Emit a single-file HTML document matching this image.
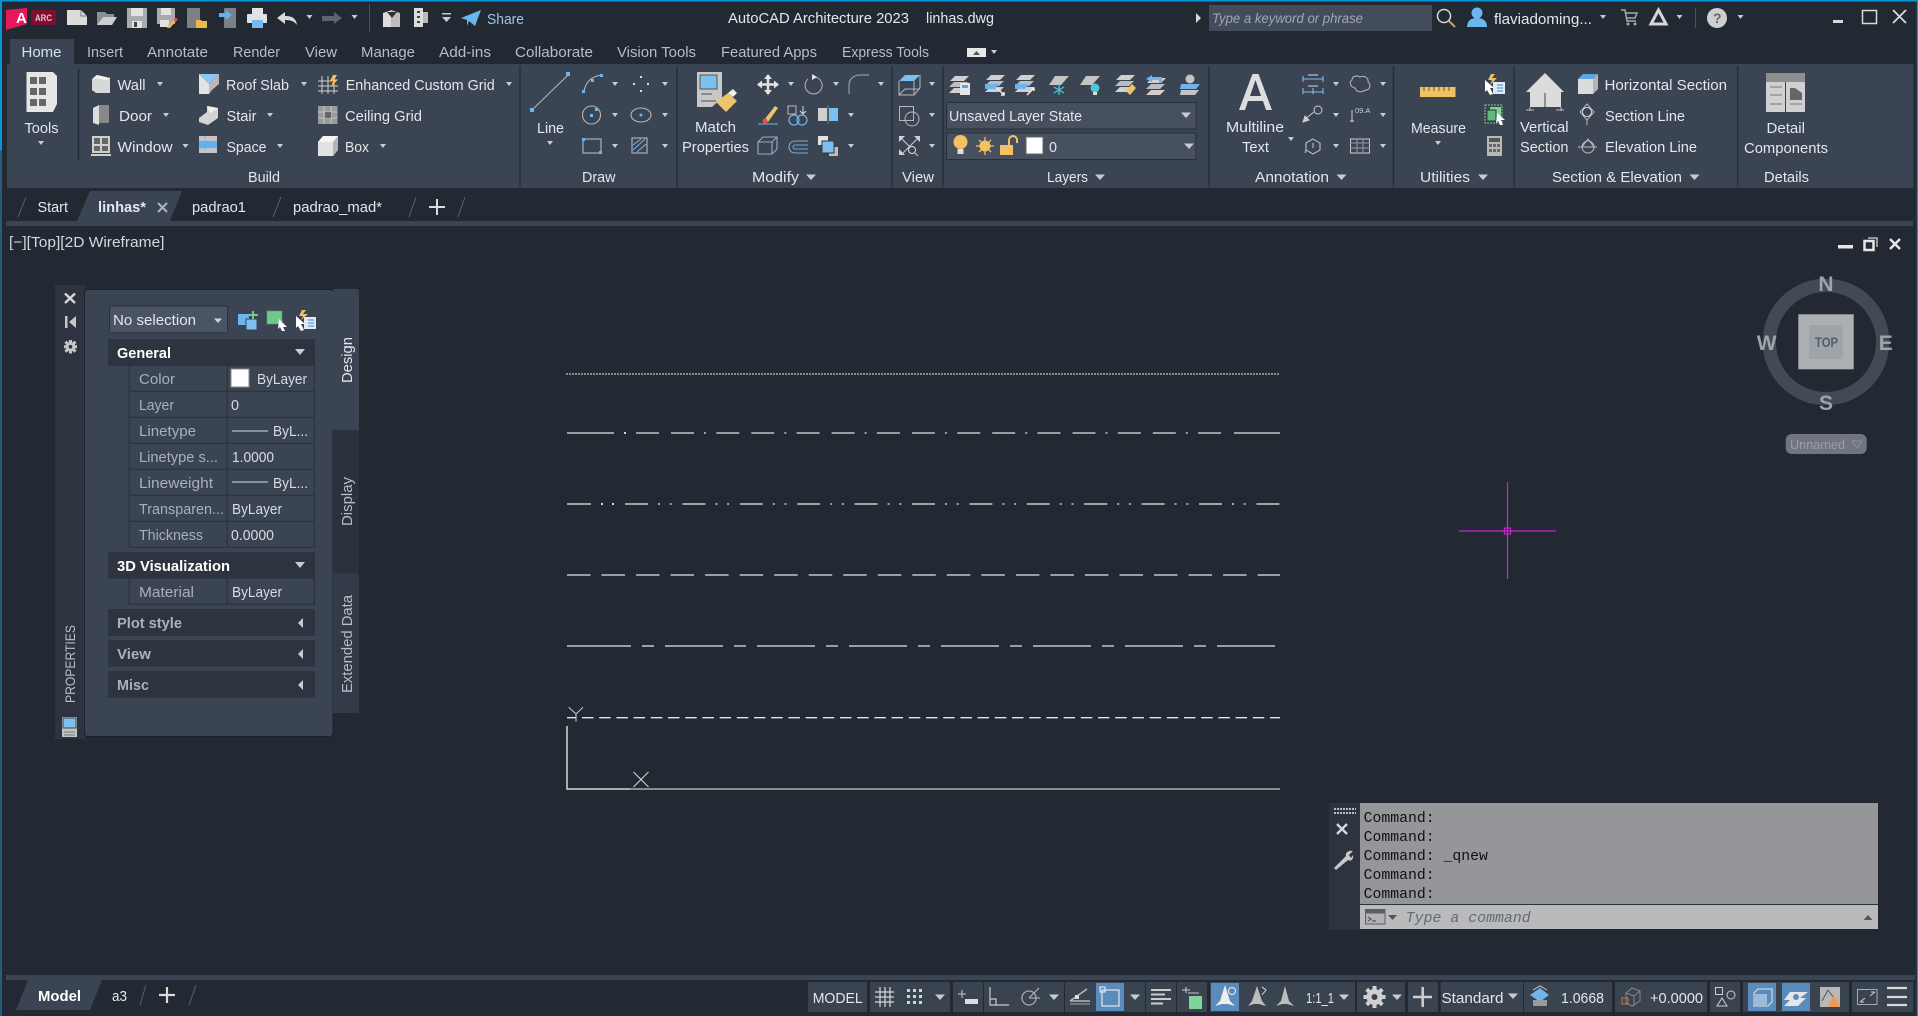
<!DOCTYPE html>
<html lang="en"><head><meta charset="utf-8"><title>AutoCAD Architecture 2023 - linhas.dwg</title>
<style>
html,body{margin:0;padding:0;width:1918px;height:1016px;overflow:hidden;background:#222933}
svg{display:block;position:absolute;left:0;top:0}
text{font-family:"Liberation Sans",sans-serif;font-size:15px;fill:#e4e7eb}
.t{fill:#b7bec9}.b{font-weight:bold}.m{font-family:"Liberation Mono","DejaVu Sans Mono",monospace;font-size:14.8px;fill:#111}
.l{fill:#a9b0ba}.v{fill:#d8dbe0}.g{fill:#aab1bb;font-weight:bold}
.sb{fill:#3a4350}.hl{fill:#5a8bbd}
.k{fill:none;stroke:#b4b8bd;stroke-width:1.1}.kb{fill:none;stroke:#6fb4ea;stroke-width:1.2}
</style></head><body>
<svg width="1918" height="1016" viewBox="0 0 1918 1016" xmlns="http://www.w3.org/2000/svg" shape-rendering="geometricPrecision">
<defs>
<path id="a" d="M-3-2H3L0 2Z" fill="#c8ccd2"/>
<path id="af" d="M-5-2.5H5L0 3Z" fill="#c8ccd2"/>
<g id="stk"><path d="M6 0H20L15 5H1Z" fill="#d0d0d0"/><path d="M5 6H19L14 11H0Z" fill="#bdbdbd"/><path d="M5 12H19L14 17H0Z" fill="#d0d0d0"/></g>
</defs>
<rect width="1918" height="1016" fill="#222933"/>
<rect width="1918" height="1.5" fill="#0696d7"/>
<rect width="2" height="150" fill="#0696d7"/>
<rect y="150" width="2" height="866" fill="#2a5b7c"/>
<rect x="1916.8" width="1.2" height="1016" fill="#0696d7"/>

<!-- QAT -->
<path d="M6 10L27 8V24L6 30Z" fill="#e8175d"/><text x="16" y="23" class="b" style="fill:#fff;font-size:15px">A</text>
<rect x="31" y="10" width="25" height="15" fill="#7f0f31"/><text x="35" y="21" class="b" textLength="17" lengthAdjust="spacingAndGlyphs" style="font-size:9.5px;fill:#e6c3ce">ARC</text>
<path d="M67 10H81L87 16V25H67Z" fill="#dcdcdc"/><path d="M81 10V16H87" fill="none" stroke="#777"/>
<path d="M97 25V12H105L107 14H114V17H103Z" fill="#8a8f96"/><path d="M97 25L103 17H117L112 25Z" fill="#cfcfcf"/>
<path d="M127 8H147V28H127Z" fill="#a8abaf"/><rect x="131" y="8" width="12" height="8" fill="#e2e2e2"/><rect x="132" y="21" width="10" height="7" fill="#e2e2e2"/><rect x="134" y="22" width="3" height="5" fill="#444"/>
<path d="M157 8H175V24H157Z" fill="#a8abaf"/><rect x="161" y="8" width="10" height="7" fill="#e2e2e2"/><rect x="160" y="20" width="9" height="7" fill="#e2e2e2"/><path d="M168 26L175 18L177 20L170 28L167 28Z" fill="#f0b95a"/><circle cx="175.500" cy="19.500" r="1.800" fill="#e0564a"/>
<rect x="187" y="8" width="13" height="20" rx="1" fill="#7d8085"/><path d="M196 20H201L202 21H207V28H196Z" fill="#e8b84a"/>
<rect x="224" y="8" width="12" height="20" rx="1" fill="#7d8085"/><path d="M219 13H226V10L232 15L226 20V17H219Z" fill="#5fb2ee"/>
<path d="M252 8H263V14H252Z" fill="#e2e2e2"/><rect x="247" y="14" width="20" height="9" rx="1" fill="#e2e2e2"/><rect x="252" y="20" width="11" height="8" fill="#72bbef"/>
<path d="M277 18L285 12V16C292 16 296 18 297 25C294 21 290 20 285 20V24Z" fill="#d8d8d8"/>
<use href="#a" x="309.500" y="17"/>
<path d="M342 18L334 12V16H322V21H334V24Z" fill="#5c6470"/>
<use href="#a" x="354.500" y="17"/>
<rect x="369" y="4" width="1" height="28" fill="#4a525e"/>
<path d="M383 13L392 10V27H383Z" fill="#dcdcdc"/><path d="M391 10L400 13V27H391Z" fill="#bdbdbd"/><path d="M387 12L392 18L397 12Z" fill="#333"/>
<rect x="414" y="8" width="9" height="19" fill="#dcdcdc"/><rect x="423" y="12" width="5" height="11" fill="#bbb"/><rect x="417" y="11" width="3" height="2" fill="#444"/><rect x="417" y="16" width="3" height="2" fill="#444"/><rect x="417" y="21" width="3" height="2" fill="#444"/>
<rect x="442" y="13" width="9" height="1.500" fill="#c8ccd2"/><path d="M442 17H451L446.500 22Z" fill="#c8ccd2"/>
<path d="M461 18L481 10L475 26L469 21L467 26V20Z" fill="#6ab7ef"/>
<text x="487" y="24" class="t" textLength="37" lengthAdjust="spacingAndGlyphs" style="fill:#9fc4e4">Share</text>

<!-- Title -->
<text x="728" y="23" textLength="181" lengthAdjust="spacingAndGlyphs">AutoCAD Architecture 2023</text>
<text x="926" y="23" textLength="68" lengthAdjust="spacingAndGlyphs">linhas.dwg</text>
<path d="M1196 13L1201 18L1196 23Z" fill="#d6d6d6"/>
<rect x="1209" y="5" width="223" height="26" fill="#434c5b"/>
<text x="1212" y="23" font-style="italic" textLength="151" lengthAdjust="spacingAndGlyphs" style="fill:#a1a8b3;font-size:14px">Type a keyword or phrase</text>
<circle cx="1444" cy="16" r="6.500" fill="none" stroke="#d6d6d6" stroke-width="1.500"/><path d="M1449 21L1455 27" stroke="#c9a15a" stroke-width="2"/>
<circle cx="1477" cy="13" r="5.500" fill="#6ab7ef"/><path d="M1467 27C1467 20 1472 18 1477 18S1487 20 1487 27Z" fill="#6ab7ef"/>
<text x="1494" y="24" textLength="98" lengthAdjust="spacingAndGlyphs">flaviadoming...</text>
<use href="#a" x="1603" y="17"/>
<path d="M1621 10H1625L1627 21H1636M1626 13H1637L1635 18H1627" fill="none" stroke="#a8a8a8" stroke-width="1.500"/><circle cx="1628" cy="24" r="1.500" fill="#a8a8a8"/><circle cx="1635" cy="24" r="1.500" fill="#a8a8a8"/>
<path d="M1658.500 10L1666 24H1651Z" fill="none" stroke="#d6d6d6" stroke-width="3"/>
<use href="#a" x="1679.500" y="17"/>
<rect x="1695" y="8" width="1" height="20" fill="#4a525e"/>
<circle cx="1717" cy="18" r="10" fill="#cfcfcf"/><text x="1713" y="23" class="b" style="fill:#666;font-size:14px">?</text>
<use href="#a" x="1740.500" y="17"/>
<rect x="1833" y="20" width="10" height="3" fill="#dadada"/>
<rect x="1862.500" y="10.500" width="14" height="13" fill="none" stroke="#dadada" stroke-width="1.500"/>
<path d="M1893 10L1906 23M1906 10L1893 23" stroke="#dadada" stroke-width="1.800"/>

<!-- Tabs -->
<rect x="10" y="39" width="64" height="25" fill="#3b4453"/>
<g>
<text x="21.500" y="57" textLength="40" lengthAdjust="spacingAndGlyphs" style="fill:#d5e2ee">Home</text>
<text x="87" y="57" class="t" textLength="36" lengthAdjust="spacingAndGlyphs">Insert</text>
<text x="147" y="57" class="t" textLength="61" lengthAdjust="spacingAndGlyphs">Annotate</text>
<text x="233" y="57" class="t" textLength="47" lengthAdjust="spacingAndGlyphs">Render</text>
<text x="305" y="57" class="t" textLength="32" lengthAdjust="spacingAndGlyphs">View</text>
<text x="361" y="57" class="t" textLength="54" lengthAdjust="spacingAndGlyphs">Manage</text>
<text x="439" y="57" class="t" textLength="52" lengthAdjust="spacingAndGlyphs">Add-ins</text>
<text x="515" y="57" class="t" textLength="78" lengthAdjust="spacingAndGlyphs">Collaborate</text>
<text x="617" y="57" class="t" textLength="79" lengthAdjust="spacingAndGlyphs">Vision Tools</text>
<text x="721" y="57" class="t" textLength="96" lengthAdjust="spacingAndGlyphs">Featured Apps</text>
<text x="842" y="57" class="t" textLength="87" lengthAdjust="spacingAndGlyphs">Express Tools</text>
</g>
<rect x="967" y="48" width="19" height="9" fill="#e8e8e8"/><path d="M973 55H980L976.500 51Z" fill="#555"/><use href="#a" x="994" y="52"/>

<!-- Ribbon -->
<rect x="7" y="64" width="1906.500" height="124" fill="#3b4453"/>
<g stroke="#272e39" stroke-width="1.500">
<path d="M520 66V187M677 66V187M892 66V187M943 66V187M1209 66V187M1393.500 66V187M1514 66V187M1737.600 66V187"/>
<path d="M78.500 69V160" stroke="#222933"/>
</g>
<!-- Tools -->
<path d="M26.500 72H53L57 76V104L53 112H26.500Z" fill="#e6e6e6"/>
<g fill="#666"><rect x="30" y="77" width="7" height="7"/><rect x="39" y="77" width="7" height="7"/><rect x="30" y="88" width="7" height="7"/><rect x="39" y="88" width="7" height="7"/><rect x="30" y="99" width="7" height="7"/><rect x="39" y="99" width="7" height="7"/></g>
<text x="24.500" y="133" textLength="34" lengthAdjust="spacingAndGlyphs">Tools</text><use href="#a" x="41" y="143"/>
<!-- Build -->
<path d="M92 79L97 75L110 78V93H96L92 90Z" fill="#d8d8d8"/><path d="M97 75L110 78L107 80L93 78Z" fill="#f0f0f0"/>
<text x="117.500" y="90" textLength="28" lengthAdjust="spacingAndGlyphs">Wall</text><use href="#a" x="160" y="84"/>
<path d="M93 108L99 105V125L93 123Z" fill="#dcdcdc"/><rect x="99" y="105" width="10" height="18" fill="#888"/>
<text x="119" y="121" textLength="33" lengthAdjust="spacingAndGlyphs">Door</text><use href="#a" x="166" y="115"/>
<rect x="92" y="136" width="18" height="17" fill="#cfcfcf"/><g fill="#666"><rect x="94" y="138" width="6" height="6"/><rect x="102" y="138" width="6" height="6"/><rect x="94" y="146" width="6" height="5"/><rect x="102" y="146" width="6" height="5"/></g><rect x="91" y="154" width="20" height="2" fill="#cfcfcf"/>
<text x="117.500" y="152" textLength="55" lengthAdjust="spacingAndGlyphs">Window</text><use href="#a" x="185.500" y="146"/>
<path d="M199 74H219L209 84Z" fill="#8cc8f5"/><path d="M199 74L209 84V94H199Z" fill="#e4e4e4"/><path d="M219 74L209 84V94L212 90L219 84Z" fill="#b8b8b8"/>
<text x="226" y="90" textLength="63" lengthAdjust="spacingAndGlyphs">Roof Slab</text><use href="#a" x="304" y="84"/>
<path d="M199 118L207 112V106L218 108V118L208 125L199 122Z" fill="#d4d4d4"/><path d="M207 106L218 108L210 113Z" fill="#f2f2f2"/>
<text x="226.500" y="121" textLength="30" lengthAdjust="spacingAndGlyphs">Stair</text><use href="#a" x="270" y="115"/>
<rect x="199" y="136" width="18" height="17" fill="#c5c5c5"/><rect x="199" y="141" width="18" height="7" fill="#5fb2ee"/><path d="M205 136V153" stroke="#5fb2ee" stroke-dasharray="2 2"/>
<text x="226.500" y="152" textLength="40" lengthAdjust="spacingAndGlyphs">Space</text><use href="#a" x="280" y="146"/>
<path d="M322 76V94M328 76V94M334 80V94M318 81H332M318 86H338M318 91H338" stroke="#cfcfcf" fill="none"/><path d="M333 75L337 75L334.500 79.500H338L331 87L333 81H330Z" fill="#f3c15d"/>
<text x="345.700" y="90" textLength="149" lengthAdjust="spacingAndGlyphs">Enhanced Custom Grid</text><use href="#a" x="509" y="84"/>
<rect x="318" y="106" width="19.500" height="18" fill="#999"/><path d="M324 106V124M331 106V124M318 112H337.500M318 118H337.500" stroke="#c4c4c4"/><rect x="325" y="112" width="6" height="6" fill="#666"/>
<text x="345" y="121" textLength="77" lengthAdjust="spacingAndGlyphs">Ceiling Grid</text>
<path d="M318 142L323 136H338V150L333 156H318Z" fill="#e2e2e2"/><path d="M333 142H318L323 136H338Z" fill="#f4f4f4"/><path d="M333 142L338 136V150L333 156Z" fill="#b4b4b4"/>
<text x="345" y="152" textLength="24" lengthAdjust="spacingAndGlyphs">Box</text><use href="#a" x="383" y="146"/>
<text x="248" y="182" textLength="32" lengthAdjust="spacingAndGlyphs">Build</text>
<!-- Draw -->
<path d="M532 110L568 75" stroke="#b4b8bd" stroke-width="1"/><rect x="530" y="108" width="4" height="4" fill="#6fb4ea"/><rect x="566" y="72" width="4" height="4" fill="#6fb4ea"/>
<text x="537" y="133" textLength="27" lengthAdjust="spacingAndGlyphs">Line</text><use href="#a" x="550" y="143"/>
<path d="M584 92C585 82 592 76 602 75" class="k"/><rect x="582" y="90" width="3" height="3" fill="#6fb4ea"/><rect x="591" y="79" width="3" height="3" fill="#6fb4ea"/><rect x="600" y="74" width="3" height="3" fill="#6fb4ea"/><use href="#a" x="615" y="84"/>
<circle cx="591.500" cy="115" r="9" class="k"/><rect x="590" y="114" width="3" height="3" fill="#6fb4ea"/><rect x="595" y="108" width="3" height="3" fill="#6fb4ea"/><use href="#a" x="615" y="115"/>
<rect x="583" y="139" width="18" height="14" class="k"/><rect x="582" y="138" width="3" height="3" fill="#6fb4ea"/><rect x="599" y="151" width="3" height="3" fill="#6fb4ea"/><use href="#a" x="615" y="146"/>
<g fill="#dcdcdc"><rect x="633" y="83" width="2" height="2"/><rect x="640" y="76" width="2" height="2"/><rect x="647" y="83" width="2" height="2"/><rect x="640" y="90" width="2" height="2"/></g><use href="#a" x="665" y="84"/>
<ellipse cx="641" cy="115" rx="10" ry="7" class="k"/><circle cx="641" cy="115" r="1.500" fill="#6fb4ea"/><use href="#a" x="665" y="115"/>
<rect x="632" y="138" width="15" height="15" class="k"/><path d="M633 150L645 139M633 145L641 139M637 152L646 144" stroke="#6fb4ea"/><use href="#a" x="665" y="146"/>
<text x="582" y="182" textLength="33.500" lengthAdjust="spacingAndGlyphs">Draw</text>
<!-- Modify -->
<path d="M697 72H722V98L712 107H697Z" fill="#c8c8c8"/><rect x="700" y="75" width="17" height="14" fill="#7cc0f0" stroke="#555"/><path d="M701 94H712M701 101H716" stroke="#777" stroke-width="1.500"/>
<path d="M716 102L728 93L737 101L726 112Z" fill="#eec36a"/><path d="M728 93L733 89L737 93L733 97Z" fill="#eee"/>
<text x="695" y="132" textLength="41" lengthAdjust="spacingAndGlyphs">Match</text>
<text x="682" y="152" textLength="67" lengthAdjust="spacingAndGlyphs">Properties</text>
<path d="M768 75V94M758 84.500H778" stroke="#e4e4e4" stroke-width="2.500"/><path d="M768 74L772 79H764ZM768 95L772 90H764ZM757 84.500L762 80.500V88.500ZM779 84.500L774 80.500V88.500Z" fill="#e4e4e4"/><use href="#a" x="791" y="84"/>
<path d="M815 77A8.500 8.500 0 1 1 808 79" fill="none" stroke="#aaa" stroke-width="1.100"/><path d="M812 74L817 77L812 80Z" fill="#e4e4e4"/><use href="#a" x="836" y="84"/>
<path d="M849 94V85" fill="none" stroke="#aaa" stroke-width="1"/><path d="M849 85C849 79 854 75 860 75" fill="none" stroke="#6fb4ea" stroke-width="1.100"/><path d="M860 75H869" stroke="#aaa"/><use href="#a" x="881" y="84"/>
<path d="M764 120L775 106L778 108L768 122Z" fill="#eec36a"/><circle cx="765" cy="121" r="2.500" fill="#e0564a"/><path d="M758 124H778" stroke="#6fb4ea"/>
<rect x="788" y="106" width="8" height="8" fill="none" stroke="#bbb"/><path d="M803 106V113M800 111L803 114L806 111" fill="none" stroke="#ddd"/><circle cx="794" cy="120" r="5" class="kb"/><circle cx="802" cy="120" r="5" class="kb"/>
<rect x="818" y="108" width="9" height="13" fill="#cfcfcf"/><rect x="829" y="108" width="9" height="13" fill="#7cc0f0"/><path d="M828 105V124" stroke="#777"/><use href="#a" x="851" y="115"/>
<path d="M758 142L763 137H777V149L772 154H758Z M758 142H772V154M772 142L777 137" fill="none" stroke="#8fb0cc" stroke-width="1.100"/>
<path d="M808 141H795A6 6 0 0 0 795 153H808M808 145H795A2 2 0 0 0 795 149H808" fill="none" stroke="#7aa9d0" stroke-width="1.100"/>
<rect x="818" y="136" width="10" height="9" fill="#e2e2e2"/><rect x="829" y="147" width="9" height="9" fill="#bdbdbd"/><rect x="822" y="141" width="12" height="12" fill="#7cc0f0" stroke="#333"/><use href="#a" x="851" y="146"/>
<text x="752" y="182" textLength="47" lengthAdjust="spacingAndGlyphs">Modify</text><use href="#af" x="811" y="177"/>
<!-- View -->
<path d="M899 81L905 75H920L914 81Z" fill="#7cc0f0"/><path d="M899 81V95H914V81M914 95L920 88V75M899 95L905 89H920" fill="none" stroke="#b8b8b8"/><use href="#a" x="932" y="84"/>
<rect x="899.500" y="106.500" width="14" height="14" fill="none" stroke="#b8b8b8"/><circle cx="912" cy="119" r="7" fill="none" stroke="#b8b8b8"/><use href="#a" x="932" y="115"/>
<path d="M900 137L915 152M919 137L902 154" stroke="#c4c4c4" stroke-width="1.200"/><path d="M899 136H905L899 142ZM920 136V142L914 136ZM899 155V149L905 155Z" fill="#d0d0d0"/><circle cx="912" cy="150" r="3.500" fill="#3b4453" stroke="#ddd"/><path d="M915 153L918 156" stroke="#c9a15a" stroke-width="1.500"/><use href="#a" x="932" y="146"/>
<text x="902" y="182" textLength="32" lengthAdjust="spacingAndGlyphs">View</text>
<!-- Layers -->
<use href="#stk" x="949" y="76"/><rect x="960" y="83" width="10" height="12" fill="#e6e6e6"/><rect x="962" y="85" width="6" height="3" fill="#5fa6de"/>
<use href="#stk" x="985" y="75"/><path d="M985 84H999L995 89H985Z" fill="#6fb4ea"/><path d="M997 88L1004 95M1001 95H1004V92" fill="none" stroke="#eee" stroke-width="1.500"/>
<use href="#stk" x="1015" y="75"/><path d="M1015 84H1029L1025 89H1015Z" fill="#6fb4ea"/><path d="M1027 95L1034 88M1031 88H1034V91" fill="none" stroke="#eee" stroke-width="1.500"/>
<path d="M1055 76H1069L1061 85H1049Z" fill="#c4c4c4"/><path d="M1059 84L1059 95M1054 87L1064 93M1064 87L1054 93" stroke="#4bc7d6" stroke-width="1.300"/>
<path d="M1086 76H1100L1092 85H1080Z" fill="#c4c4c4"/><circle cx="1095" cy="88" r="4.500" fill="#4bc7d6"/><rect x="1093" y="92" width="4" height="3" fill="#ddd"/>
<use href="#stk" x="1115" y="75"/><path d="M1126 91L1132 84L1136 88L1130 95Z" fill="#eec36a"/>
<use href="#stk" x="1146" y="78"/><path d="M1146 79L1152 75V77H1162V83H1159V80H1152V82Z" fill="#6fb4ea"/>
<path d="M1181 84H1200L1196 89H1180Z" fill="#6fb4ea"/><path d="M1181 90H1199L1195 95H1180Z" fill="#c4c4c4"/><circle cx="1190" cy="79" r="4.500" fill="#c4c4c4"/>
<rect x="946.500" y="102.500" width="249.500" height="26.500" fill="#46505f" stroke="#29303b"/>
<text x="949" y="121" textLength="133" lengthAdjust="spacingAndGlyphs">Unsaved Layer State</text><use href="#af" x="1186" y="115"/>
<rect x="946.500" y="133" width="249.500" height="26.500" fill="#46505f" stroke="#29303b"/>
<circle cx="960.500" cy="142" r="7" fill="#f4c262"/><rect x="957.500" y="149" width="6" height="5" fill="#e0e0e0"/>
<circle cx="985" cy="146" r="5.500" fill="#f4c262"/><path d="M985 137V141M985 151V155M976 146H980M990 146H994M979 140L982 143M988 149L991 152M991 140L988 143M982 149L979 152" stroke="#f4c262" stroke-width="1.300"/>
<rect x="1000" y="145" width="13" height="10" fill="#f4c262"/><path d="M1009 145V140A4 4 0 0 1 1017 140V143" fill="none" stroke="#f4c262" stroke-width="2"/>
<rect x="1026" y="137" width="17" height="17" fill="#fff" stroke="#666"/>
<text x="1049" y="152" textLength="8" lengthAdjust="spacingAndGlyphs">0</text><use href="#af" x="1189" y="146"/>
<text x="1047" y="182" textLength="41" lengthAdjust="spacingAndGlyphs">Layers</text><use href="#af" x="1100" y="177"/>
<!-- Annotation -->
<path d="M1239 110L1252.500 74H1258.500L1272 110H1266L1263 101H1248L1245 110ZM1250 96H1261L1255.500 80Z" fill="#dedede"/>
<text x="1226" y="132" textLength="58" lengthAdjust="spacingAndGlyphs">Multiline</text>
<text x="1242" y="152" textLength="27" lengthAdjust="spacingAndGlyphs">Text</text><use href="#a" x="1291" y="139"/>
<path d="M1303 79H1323M1303 76V82M1323 76V82M1303 92H1323M1303 88V94M1313 88V94M1323 88V94" fill="none" stroke="#7cbcec" stroke-width="1.100"/><path d="M1308 75H1318" stroke="#ddd"/><path d="M1308 86H1318" stroke="#ddd"/><use href="#a" x="1336" y="84"/>
<path d="M1352 80C1352 76 1357 75 1360 77C1364 75 1369 78 1368 82C1372 85 1369 91 1365 90C1362 93 1356 92 1355 88C1350 87 1349 82 1352 80Z" fill="none" stroke="#bbb"/><use href="#a" x="1383" y="84"/>
<circle cx="1318" cy="110" r="4" fill="none" stroke="#ccc"/><path d="M1314 112L1305 119M1303 122L1309 120L1305 116Z" fill="#ccc" stroke="#ccc"/><use href="#a" x="1336" y="115"/>
<path d="M1352 110V122M1350 121H1354" stroke="#ccc"/><text x="1355" y="113" style="font-size:7.500px;fill:#ccc">09.A</text><use href="#a" x="1383" y="115"/>
<path d="M1313 139L1320 143V150L1313 154L1306 150V143Z" fill="none" stroke="#ccc"/><path d="M1313 143V148" stroke="#ccc"/><path d="M1306 150L1305 153" stroke="#ccc"/><use href="#a" x="1336" y="146"/>
<rect x="1350.500" y="139" width="19" height="14" fill="none" stroke="#ccc"/><path d="M1350 143H1370M1350 148H1370M1357 139V153M1363 139V153" stroke="#999"/><use href="#a" x="1383" y="146"/>
<text x="1255" y="182" textLength="74" lengthAdjust="spacingAndGlyphs">Annotation</text><use href="#af" x="1341.500" y="177"/>
<!-- Utilities -->
<rect x="1420" y="87" width="35.500" height="10" fill="#f0c264"/><path d="M1424 87V91M1429 87V91M1434 87V91M1439 87V91M1444 87V91M1449 87V91" stroke="#7a5a20"/>
<text x="1411" y="133" textLength="55" lengthAdjust="spacingAndGlyphs">Measure</text><use href="#a" x="1438" y="143"/>
<rect x="1493" y="82" width="12" height="12" fill="#ddeaf5"/><path d="M1497 85H1503M1497 88H1503M1497 91H1503" stroke="#3b8ccc"/><path d="M1485 80L1494 88H1490L1493 94L1490 95L1487 90L1485 92Z" fill="#fff"/><path d="M1491 74L1495 74L1492 78H1497L1490 85L1492 80H1488Z" fill="#f0c264"/>
<rect x="1485" y="105" width="17" height="18" fill="none" stroke="#6fd08a" stroke-dasharray="2 1"/><rect x="1490" y="107" width="11" height="12" fill="#7ed39a"/><rect x="1487" y="110" width="9" height="11" fill="#5fb87d" stroke="#333"/><path d="M1497 113L1505 120H1501L1503 125L1500 125L1498 121L1496 123Z" fill="#fff"/>
<rect x="1487" y="136" width="15" height="20" fill="#b8b8b8"/><rect x="1489" y="138" width="11" height="4" fill="#555"/><g fill="#666"><rect x="1489" y="144" width="3" height="3"/><rect x="1493" y="144" width="3" height="3"/><rect x="1497" y="144" width="3" height="3"/><rect x="1489" y="149" width="3" height="3"/><rect x="1493" y="149" width="3" height="3"/><rect x="1497" y="149" width="3" height="3"/></g>
<text x="1420" y="182" textLength="50" lengthAdjust="spacingAndGlyphs">Utilities</text><use href="#af" x="1483" y="177"/>
<!-- Section -->
<path d="M1545 73L1564 92H1526Z" fill="#dcdcdc"/><rect x="1530" y="92" width="31" height="15" fill="#dcdcdc"/><path d="M1545 93V107" stroke="#444"/><path d="M1526 110H1534M1556 110H1564M1530 107V111M1561 107V111" stroke="#bbb"/>
<text x="1520" y="132" textLength="48.500" lengthAdjust="spacingAndGlyphs">Vertical</text>
<text x="1520" y="152" textLength="48.500" lengthAdjust="spacingAndGlyphs">Section</text>
<path d="M1578 79L1583 74H1598L1593 79Z" fill="#5fa6de"/><rect x="1578" y="79" width="15" height="15" fill="#dcdcdc"/><path d="M1593 79L1598 74V89L1593 94Z" fill="#b4b4b4"/>
<text x="1604.500" y="90" textLength="122.500" lengthAdjust="spacingAndGlyphs">Horizontal Section</text>
<circle cx="1587" cy="112" r="4.500" fill="none" stroke="#ddd"/><path d="M1587 104L1594 112L1587 120L1580 112Z" fill="none" stroke="#bbb"/><path d="M1587 120V125" stroke="#bbb"/>
<text x="1605" y="121" textLength="80" lengthAdjust="spacingAndGlyphs">Section Line</text>
<circle cx="1588" cy="147" r="6" fill="none" stroke="#bbb"/><path d="M1578 147H1597M1588 139L1582 147H1594Z" fill="none" stroke="#bbb"/>
<text x="1605" y="152" textLength="92" lengthAdjust="spacingAndGlyphs">Elevation Line</text>
<text x="1552" y="182" textLength="130" lengthAdjust="spacingAndGlyphs">Section &amp; Elevation</text><use href="#af" x="1694.500" y="177"/>
<!-- Details -->
<rect x="1766" y="73" width="39" height="9" fill="#8e8e8e"/><rect x="1766" y="82" width="19" height="30" fill="#d0d0d0"/><rect x="1786" y="82" width="19" height="30" fill="#d0d0d0"/><path d="M1770 87H1782M1770 95H1782M1770 104H1782" stroke="#777"/><path d="M1790 88H1795L1802 93V100H1790Z" fill="#666"/><path d="M1790 104H1802" stroke="#777"/>
<text x="1766.500" y="133" textLength="38.500" lengthAdjust="spacingAndGlyphs">Detail</text>
<text x="1744" y="153" textLength="84" lengthAdjust="spacingAndGlyphs">Components</text>
<text x="1764" y="182" textLength="45" lengthAdjust="spacingAndGlyphs">Details</text>

<!-- File tabs -->
<rect x="6" y="221" width="1907" height="5" fill="#3b4453"/>
<path d="M77 221L90 191H182L170 221Z" fill="#3b4453"/>
<g stroke="#59616d"><path d="M18 217L26 197M273 217L281 197M409 217L416 197M458 217L465 197"/></g>
<text x="37.500" y="212" textLength="30.500" lengthAdjust="spacingAndGlyphs">Start</text>
<text x="98" y="212" class="b" textLength="48" lengthAdjust="spacingAndGlyphs">linhas*</text>
<path d="M158 203L167 212M167 203L158 212" stroke="#b0b4ba" stroke-width="2"/>
<text x="192" y="212" textLength="54" lengthAdjust="spacingAndGlyphs">padrao1</text>
<text x="293" y="212" textLength="89" lengthAdjust="spacingAndGlyphs">padrao_mad*</text>
<path d="M437 199V215M429 207H445" stroke="#dcdcdc" stroke-width="2"/>
<text x="9" y="247" textLength="155.500" lengthAdjust="spacingAndGlyphs" style="font-size:15px;fill:#d4d8dd">[−][Top][2D Wireframe]</text>

<!-- Viewport controls -->
<rect x="1838" y="245" width="15" height="3.500" fill="#e6e6e6"/>
<rect x="1864.500" y="241" width="9" height="9" fill="none" stroke="#e6e6e6" stroke-width="2.500"/><path d="M1868 238H1877V247" fill="none" stroke="#bbb" stroke-width="1.500"/>
<path d="M1890 239L1900 249M1900 239L1890 249" stroke="#e6e6e6" stroke-width="2.500"/>

<!-- ViewCube -->
<circle cx="1826" cy="342" r="56.700" fill="none" stroke="#424a55" stroke-width="13.300"/>
<rect x="1798.300" y="314.300" width="55.400" height="55" fill="#adb0b3"/>
<rect x="1809" y="325" width="34" height="34" fill="#9da4aa"/>
<text x="1815" y="347" class="b" textLength="23" lengthAdjust="spacingAndGlyphs" style="font-size:14px;fill:#555d68">TOP</text>
<text x="1826" y="291" text-anchor="middle" style="font-size:21px;font-weight:bold;fill:#a0a4a9">N</text>
<text x="1826" y="410" text-anchor="middle" style="font-size:21px;font-weight:bold;fill:#a0a4a9">S</text>
<text x="1766.700" y="350" text-anchor="middle" style="font-size:21px;font-weight:bold;fill:#a0a4a9">W</text>
<text x="1885.700" y="350" text-anchor="middle" style="font-size:21px;font-weight:bold;fill:#a0a4a9">E</text>
<rect x="1785.700" y="434" width="81" height="20" rx="6" fill="#70757f"/>
<text x="1790" y="449" textLength="55" lengthAdjust="spacingAndGlyphs" style="font-size:13px;fill:#9b9ea5">Unnamed</text>
<path d="M1852 441H1862L1857 448Z" fill="none" stroke="#8f939b"/>

<!-- Properties palette -->
<rect x="55" y="285" width="30" height="454" fill="#2d3440"/>
<path d="M65 293.500L75 303M75 293.500L65 303" stroke="#d4d4d4" stroke-width="2.500"/>
<rect x="65" y="316" width="2.500" height="12" fill="#c6c6c6"/><path d="M76 316V328L69 322Z" fill="#c6c6c6"/>
<path d="M70.500 340V353.500M64 346.700H77M65.500 341.700L75.500 351.700M75.500 341.700L65.500 351.700" stroke="#c6c6c6" stroke-width="3"/><circle cx="70.500" cy="346.700" r="4.800" fill="#c6c6c6"/><circle cx="70.500" cy="346.700" r="1.800" fill="#2d3440"/>
<text x="75" y="703" transform="rotate(-90 75 703)" textLength="78" lengthAdjust="spacingAndGlyphs" class="t" style="font-size:14px">PROPERTIES</text>
<rect x="62" y="717" width="15" height="20" fill="#c4c4c4"/><rect x="63" y="718" width="13" height="10" fill="#7cc0f0" stroke="#444"/><path d="M64 732H75M64 735H75" stroke="#777"/>
<rect x="84.500" y="289.500" width="248.500" height="447" rx="3" fill="#3b4453" stroke="#1c222a"/>
<path d="M333 289H356Q359 289 359 292V430H333Z" fill="#3b4453"/>
<path d="M333 430H359V572.700H333Z" fill="#2b323e"/>
<path d="M333 572.700H356Q359 572.700 359 575.700V713H333Z" fill="#333b48"/>
<rect x="332" y="291" width="2" height="138" fill="#3b4453"/>
<text x="352" y="383" transform="rotate(-90 352 383)" textLength="46" lengthAdjust="spacingAndGlyphs">Design</text>
<text x="352" y="526" transform="rotate(-90 352 526)" textLength="49" lengthAdjust="spacingAndGlyphs" class="t">Display</text>
<text x="352" y="693" transform="rotate(-90 352 693)" textLength="98" lengthAdjust="spacingAndGlyphs" class="t">Extended Data</text>
<rect x="109.500" y="306" width="118" height="27" rx="2" fill="#4a5464" stroke="#2a303b"/>
<text x="113" y="325" textLength="83" lengthAdjust="spacingAndGlyphs">No selection</text><path d="M214 318.500H222L218 323Z" fill="#d0d4da"/>
<rect x="238" y="314" width="11" height="11" fill="#6fb4ea"/><rect x="246" y="319" width="11" height="11" fill="#7cc0f0" stroke="#3b4453"/><path d="M253 311V319M249 315H258" stroke="#6fd08a" stroke-width="2"/>
<rect x="267" y="311" width="15" height="13" fill="#6fc98d" stroke="#4f9d6c" stroke-dasharray="2 1"/><path d="M279 319L287 327H283L285 331L282 331L280 327L278 329Z" fill="#fff"/>
<rect x="304" y="317" width="12" height="12" fill="#ddeaf5"/><path d="M308 320H314M308 323H314M308 326H314" stroke="#3b8ccc"/><path d="M296 316L305 324H301L304 330L301 331L298 326L296 328Z" fill="#fff"/><path d="M302 310L306 310L303 314H308L301 320L303 316H299Z" fill="#f0c264"/>
<rect x="108" y="339" width="207" height="27" fill="#2d3440"/>
<text x="117" y="358" class="b" textLength="54" lengthAdjust="spacingAndGlyphs" style="fill:#fff">General</text><path d="M295 349H305L300 355Z" fill="#c8ccd2"/>
<g stroke="#2d3440" stroke-width="1.300" fill="none">
<path d="M129.300 366V547.300H314.300V366M227.300 366V547.300M129.300 391.300H314.300M129.300 417.300H314.300M129.300 443.300H314.300M129.300 469.300H314.300M129.300 495.300H314.300M129.300 521.300H314.300"/>
</g>
<text x="139" y="384" class="l" textLength="36" lengthAdjust="spacingAndGlyphs">Color</text>
<text x="139" y="410" class="l" textLength="35" lengthAdjust="spacingAndGlyphs">Layer</text>
<text x="139" y="436" class="l" textLength="57" lengthAdjust="spacingAndGlyphs">Linetype</text>
<text x="139" y="462" class="l" textLength="79" lengthAdjust="spacingAndGlyphs">Linetype s...</text>
<text x="139" y="488" class="l" textLength="74" lengthAdjust="spacingAndGlyphs">Lineweight</text>
<text x="139" y="514" class="l" textLength="85" lengthAdjust="spacingAndGlyphs">Transparen...</text>
<text x="139" y="540" class="l" textLength="64" lengthAdjust="spacingAndGlyphs">Thickness</text>
<rect x="231" y="369" width="18" height="18" fill="#fff" stroke="#888"/>
<text x="257" y="384" class="v" textLength="50" lengthAdjust="spacingAndGlyphs">ByLayer</text>
<text x="231" y="410" class="v" textLength="8" lengthAdjust="spacingAndGlyphs">0</text>
<path d="M232 431H268M232 482H268" stroke="#ddd"/>
<text x="273" y="436" class="v" textLength="35" lengthAdjust="spacingAndGlyphs">ByL...</text>
<text x="232" y="462" class="v" textLength="42" lengthAdjust="spacingAndGlyphs">1.0000</text>
<text x="273" y="488" class="v" textLength="35" lengthAdjust="spacingAndGlyphs">ByL...</text>
<text x="232" y="514" class="v" textLength="50" lengthAdjust="spacingAndGlyphs">ByLayer</text>
<text x="231" y="540" class="v" textLength="43" lengthAdjust="spacingAndGlyphs">0.0000</text>
<rect x="108" y="552" width="207" height="26.700" fill="#2d3440"/>
<text x="117" y="571" class="b" textLength="113" lengthAdjust="spacingAndGlyphs" style="fill:#fff">3D Visualization</text><path d="M295 562H305L300 568Z" fill="#c8ccd2"/>
<path d="M129.300 578.700V604.300H314.300V578.700M227.300 578.700V604.300" stroke="#2d3440" stroke-width="1.300" fill="none"/>
<text x="139" y="597" class="l" textLength="55" lengthAdjust="spacingAndGlyphs">Material</text>
<text x="232" y="597" class="v" textLength="50" lengthAdjust="spacingAndGlyphs">ByLayer</text>
<rect x="108" y="609" width="207" height="27" fill="#2d3440"/><text x="117" y="628" class="g" textLength="65" lengthAdjust="spacingAndGlyphs">Plot style</text><path d="M303 618V628L298 623Z" fill="#c8ccd2"/>
<rect x="108" y="640" width="207" height="26.700" fill="#2d3440"/><text x="117" y="659" class="g" textLength="34" lengthAdjust="spacingAndGlyphs">View</text><path d="M303 649V659L298 654Z" fill="#c8ccd2"/>
<rect x="108" y="671" width="207" height="26.700" fill="#2d3440"/><text x="117" y="690" class="g" textLength="32" lengthAdjust="spacingAndGlyphs">Misc</text><path d="M303 680V690L298 685Z" fill="#c8ccd2"/>

<!-- Drawing -->
<g fill="none">
<line x1="566" y1="374" x2="1279" y2="374" stroke="#a8a8a8" stroke-width="1.500" stroke-dasharray="2 1"/>
<line x1="567" y1="433" x2="614" y2="433" stroke="#9a9c9f" stroke-width="2"/>
<line x1="636" y1="433" x2="1222" y2="433" stroke="#9a9c9f" stroke-width="2" stroke-dasharray="23 12 23 10 2 10.300"/>
<rect x="624" y="432" width="2" height="2" fill="#d8d8d8"/>
<line x1="1234" y1="433" x2="1280" y2="433" stroke="#9a9c9f" stroke-width="2"/>
<line x1="567" y1="504" x2="591" y2="504" stroke="#a0a2a5" stroke-width="2"/>
<rect x="601" y="503" width="2" height="2" fill="#d8d8d8"/><rect x="612" y="503" width="2" height="2" fill="#d8d8d8"/>
<line x1="625" y1="504" x2="1280" y2="504" stroke="#a0a2a5" stroke-width="2" stroke-dasharray="23 10 2 9.700 2 10.700"/>
<line x1="567" y1="575" x2="1280" y2="575" stroke="#e4e4e4" stroke-width="1.300" stroke-dasharray="23.500 11.030"/>
<line x1="567" y1="646" x2="631" y2="646" stroke="#e4e4e4" stroke-width="1.300"/>
<line x1="642" y1="646" x2="654" y2="646" stroke="#e4e4e4" stroke-width="1.300"/>
<line x1="665" y1="646" x2="1280" y2="646" stroke="#e4e4e4" stroke-width="1.300" stroke-dasharray="58 11 12 11"/>
<line x1="567" y1="717.700" x2="1280" y2="717.700" stroke="#e4e4e4" stroke-width="1.300" stroke-dasharray="11.500 5.700" stroke-dashoffset="2.200"/>
<path d="M568.700 707.300L576 714L583 707.300M576 714V721.700" stroke="#d4d4d4" stroke-width="1"/>
<path d="M567 726V789H630" stroke="#d8d8d8" stroke-width="1.500"/>
<line x1="630" y1="789" x2="1280" y2="789" stroke="#9a9c9f" stroke-width="1.800"/>
<path d="M633.500 772L648.500 787M648.500 772L633.500 787" stroke="#d4d4d4"/>
<path d="M1459 531H1556M1507.500 482V579" stroke="#d020d0" stroke-width="1.200"/>
<rect x="1504.500" y="528" width="6" height="6" stroke="#d020d0" stroke-width="1.200"/>
</g>

<!-- Command -->
<rect x="1329" y="803" width="31" height="127" fill="#2d3440"/>
<rect x="1360" y="803" width="518" height="101" fill="#949699"/>
<rect x="1360" y="904" width="518" height="1" fill="#2d3440"/>
<rect x="1360" y="905" width="518" height="24" fill="#b8babc"/>
<path d="M1334 809H1356M1334 813H1356" stroke="#cfcfcf" stroke-width="1.800" stroke-dasharray="2 1"/>
<path d="M1337 824L1347 834M1347 824L1337 834" stroke="#d8d8d8" stroke-width="2.300"/>
<path d="M1334 868L1346 856C1345 853 1348 850 1353 851L1349 855L1351 858L1353 855C1354 859 1351 862 1348 860L1336 870Z" fill="#c8c8c8"/>
<text class="m" x="1363.600" y="822">Command:</text>
<text class="m" x="1363.600" y="841">Command:</text>
<text class="m" x="1363.600" y="860">Command: _qnew</text>
<text class="m" x="1363.600" y="879">Command:</text>
<text class="m" x="1363.600" y="898">Command:</text>
<rect x="1365.500" y="909.500" width="19.500" height="14.500" fill="#b0b2b4" stroke="#5b5e63"/><rect x="1365.500" y="909.500" width="19.500" height="4" fill="#5b5e63"/><path d="M1368 917L1371 919L1368 921M1372 921H1376" stroke="#444" fill="none"/>
<path d="M1388 915H1397L1392.500 920Z" fill="#555"/>
<text class="m" x="1405.700" y="922" font-style="italic" textLength="125" style="fill:#66696e">Type a command</text>
<path d="M1863.500 920H1872.500L1868 915Z" fill="#555"/>

<!-- Layout tabs -->
<rect x="6" y="975" width="1909" height="5" fill="#3b4453"/>
<path d="M16 1010L28 980H102L90 1010Z" fill="#3b4453"/>
<text x="38" y="1001" class="b" textLength="43" lengthAdjust="spacingAndGlyphs" style="fill:#fff">Model</text>
<text x="112" y="1001" textLength="15" lengthAdjust="spacingAndGlyphs">a3</text>
<path d="M140 1005L146 985M189 1005L196 985" stroke="#59616d"/>
<path d="M167 987V1003M159 995H175" stroke="#dcdcdc" stroke-width="2.200"/>

<!-- Status bar -->
<rect x="808" y="982" width="59" height="30" class="sb"/>
<rect x="870" y="982" width="80" height="30" class="sb"/>
<rect x="953" y="982" width="30" height="30" class="sb"/>
<rect x="984" y="982" width="80" height="30" class="sb"/>
<rect x="1065" y="982" width="80" height="30" class="sb"/>
<rect x="1146" y="982" width="30" height="30" class="sb"/>
<rect x="1177" y="982" width="30" height="30" class="sb"/>
<rect x="1210" y="982" width="145" height="30" class="sb"/>
<rect x="1357" y="982" width="48" height="30" class="sb"/>
<rect x="1408" y="982" width="30" height="30" class="sb"/>
<rect x="1440.700" y="982" width="82.300" height="30" class="sb"/>
<rect x="1524" y="982" width="88" height="30" class="sb"/>
<rect x="1615" y="982" width="92" height="30" class="sb"/>
<rect x="1710" y="982" width="30" height="30" class="sb"/>
<rect x="1743" y="982" width="106" height="30" class="sb"/>
<rect x="1852" y="982" width="61" height="30" class="sb"/>
<rect x="1096" y="983" width="28" height="28" class="hl"/>
<rect x="1211" y="983" width="28" height="28" class="hl"/>
<rect x="1748" y="983" width="28" height="28" class="hl"/>
<rect x="1782" y="983" width="28" height="28" class="hl"/>
<text x="812.700" y="1003" textLength="50" lengthAdjust="spacingAndGlyphs">MODEL</text>
<path d="M875 992H894M875 997H894M875 1002H894M880 987V1007M885 987V1007M890 987V1007" stroke="#d8d8d8" stroke-width="1.200"/>
<g fill="#d4d4d4"><rect x="907" y="989" width="3" height="3"/><rect x="913" y="989" width="3" height="3"/><rect x="919" y="989" width="3" height="3"/><rect x="907" y="995" width="3" height="3"/><rect x="913" y="995" width="3" height="3"/><rect x="919" y="995" width="3" height="3"/><rect x="907" y="1001" width="3" height="3"/><rect x="913" y="1001" width="3" height="3"/><rect x="919" y="1001" width="3" height="3"/></g>
<use href="#af" x="940" y="997"/>
<path d="M958 994H966M962 990V998" stroke="#ccc"/><rect x="965" y="999" width="13" height="5" fill="#ddd"/>
<path d="M990 987V1005H1009M990 999H996V1005" fill="none" stroke="#ccc" stroke-width="1.200"/>
<circle cx="1029" cy="998" r="7" fill="none" stroke="#aaa" stroke-width="1.300"/><path d="M1029 998L1039 988M1029 998H1040" stroke="#bbb"/>
<use href="#af" x="1054" y="997"/>
<path d="M1070 1001L1087 989M1070 1001H1090" stroke="#b8b8b8" stroke-width="1.500"/><rect x="1075" y="995" width="4" height="4" fill="#ddd"/><path d="M1070 1004H1090" stroke="#888" stroke-width="1.500"/>
<rect x="1102" y="990" width="17" height="16" fill="none" stroke="#e6e6e6" stroke-width="1.200"/><rect x="1100" y="987" width="5" height="5" fill="none" stroke="#e6e6e6" stroke-width="1.200"/>
<use href="#af" x="1135" y="997"/>
<path d="M1151 990H1171M1151 994.500H1165M1151 999H1171M1151 1003.500H1163" stroke="#ccc" stroke-width="2"/>
<path d="M1182 990H1190M1186 987V993" stroke="#ccc"/><path d="M1188 993H1199" stroke="#ccc"/><rect x="1189" y="996" width="13" height="13" fill="#7fd49b"/>
<path d="M1225 985L1230 1001L1235 1006L1228 1004H1222L1215 1006L1220 1001Z" fill="#eee"/><circle cx="1232" cy="991" r="3.500" fill="none" stroke="#eee"/>
<path d="M1257 986L1262 1001L1266 1006L1259 1004H1254L1248 1006L1252 1001Z" fill="#bdbdbd"/><path d="M1262 987L1266 990L1262 995" stroke="#ddd" fill="none"/>
<path d="M1285 986L1289 1001L1294 1006L1287 1004H1282L1276 1006L1281 1001Z" fill="#bdbdbd"/>
<text x="1306" y="1003" textLength="28" lengthAdjust="spacingAndGlyphs">1:1_1</text>
<use href="#af" x="1344" y="997"/>
<path d="M1374.500 986V1008M1363.500 997H1385.500M1366.700 989.200L1382.300 1004.800M1382.300 989.200L1366.700 1004.800" stroke="#d0d0d0" stroke-width="4"/><circle cx="1374.500" cy="997" r="8" fill="#d0d0d0"/><circle cx="1374.500" cy="997" r="3" fill="#3a4350"/>
<use href="#af" x="1397" y="997"/>
<path d="M1422.700 987V1007M1413 997H1432" stroke="#cfcfcf" stroke-width="2.500"/>
<text x="1441.500" y="1003" textLength="62" lengthAdjust="spacingAndGlyphs">Standard</text>
<use href="#af" x="1513" y="996"/>
<path d="M1530 995L1540 988L1549 995L1540 1002Z" fill="#6fb4ea"/><path d="M1533 1000V1006H1547V1000" fill="#9a9a9a"/><path d="M1533 990L1540 986L1547 990" fill="none" stroke="#ccc"/>
<text x="1561" y="1003" textLength="43" lengthAdjust="spacingAndGlyphs">1.0668</text>
<path d="M1626 993L1632 988L1640 991V1001L1632 1006L1626 1003ZM1626 993L1634 996L1640 991M1634 996V1006" fill="none" stroke="#888"/><rect x="1622" y="998" width="6" height="6" fill="none" stroke="#c47a4a"/>
<text x="1650" y="1003" textLength="53" lengthAdjust="spacingAndGlyphs">+0.0000</text>
<rect x="1715.500" y="987.500" width="7" height="7" fill="none" stroke="#ccc"/><circle cx="1731" cy="995" r="4" fill="none" stroke="#ccc"/><path d="M1722 998L1727 1006H1717Z" fill="none" stroke="#ccc"/>
<path d="M1754 993L1758 989H1772V1002L1768 1006H1754Z" fill="none" stroke="#e6e6e6"/><rect x="1755" y="994" width="12" height="11" fill="#9bbbd8"/>
<path d="M1790 992H1808L1800 998H1806L1798 1006H1784L1790 1000H1784Z" fill="#e6e6e6"/><circle cx="1796" cy="997" r="3" fill="#5a8bbd"/>
<rect x="1820" y="987" width="20" height="20" fill="#b8b8b8"/><path d="M1822 1001L1828 990L1834 998" fill="none" stroke="#555"/><path d="M1834 995L1840 1007H1828Z" fill="#ee9a55"/>
<rect x="1857.500" y="989.500" width="19.500" height="15" fill="none" stroke="#aaa"/><path d="M1860 1002L1865 998M1875 992L1870 996M1860 1002H1864M1875 992H1871" stroke="#ccc" fill="none"/>
<path d="M1887 988H1907M1887 997H1907M1887 1005H1907" stroke="#d8d8d8" stroke-width="2.200"/>
</svg>
</body></html>
